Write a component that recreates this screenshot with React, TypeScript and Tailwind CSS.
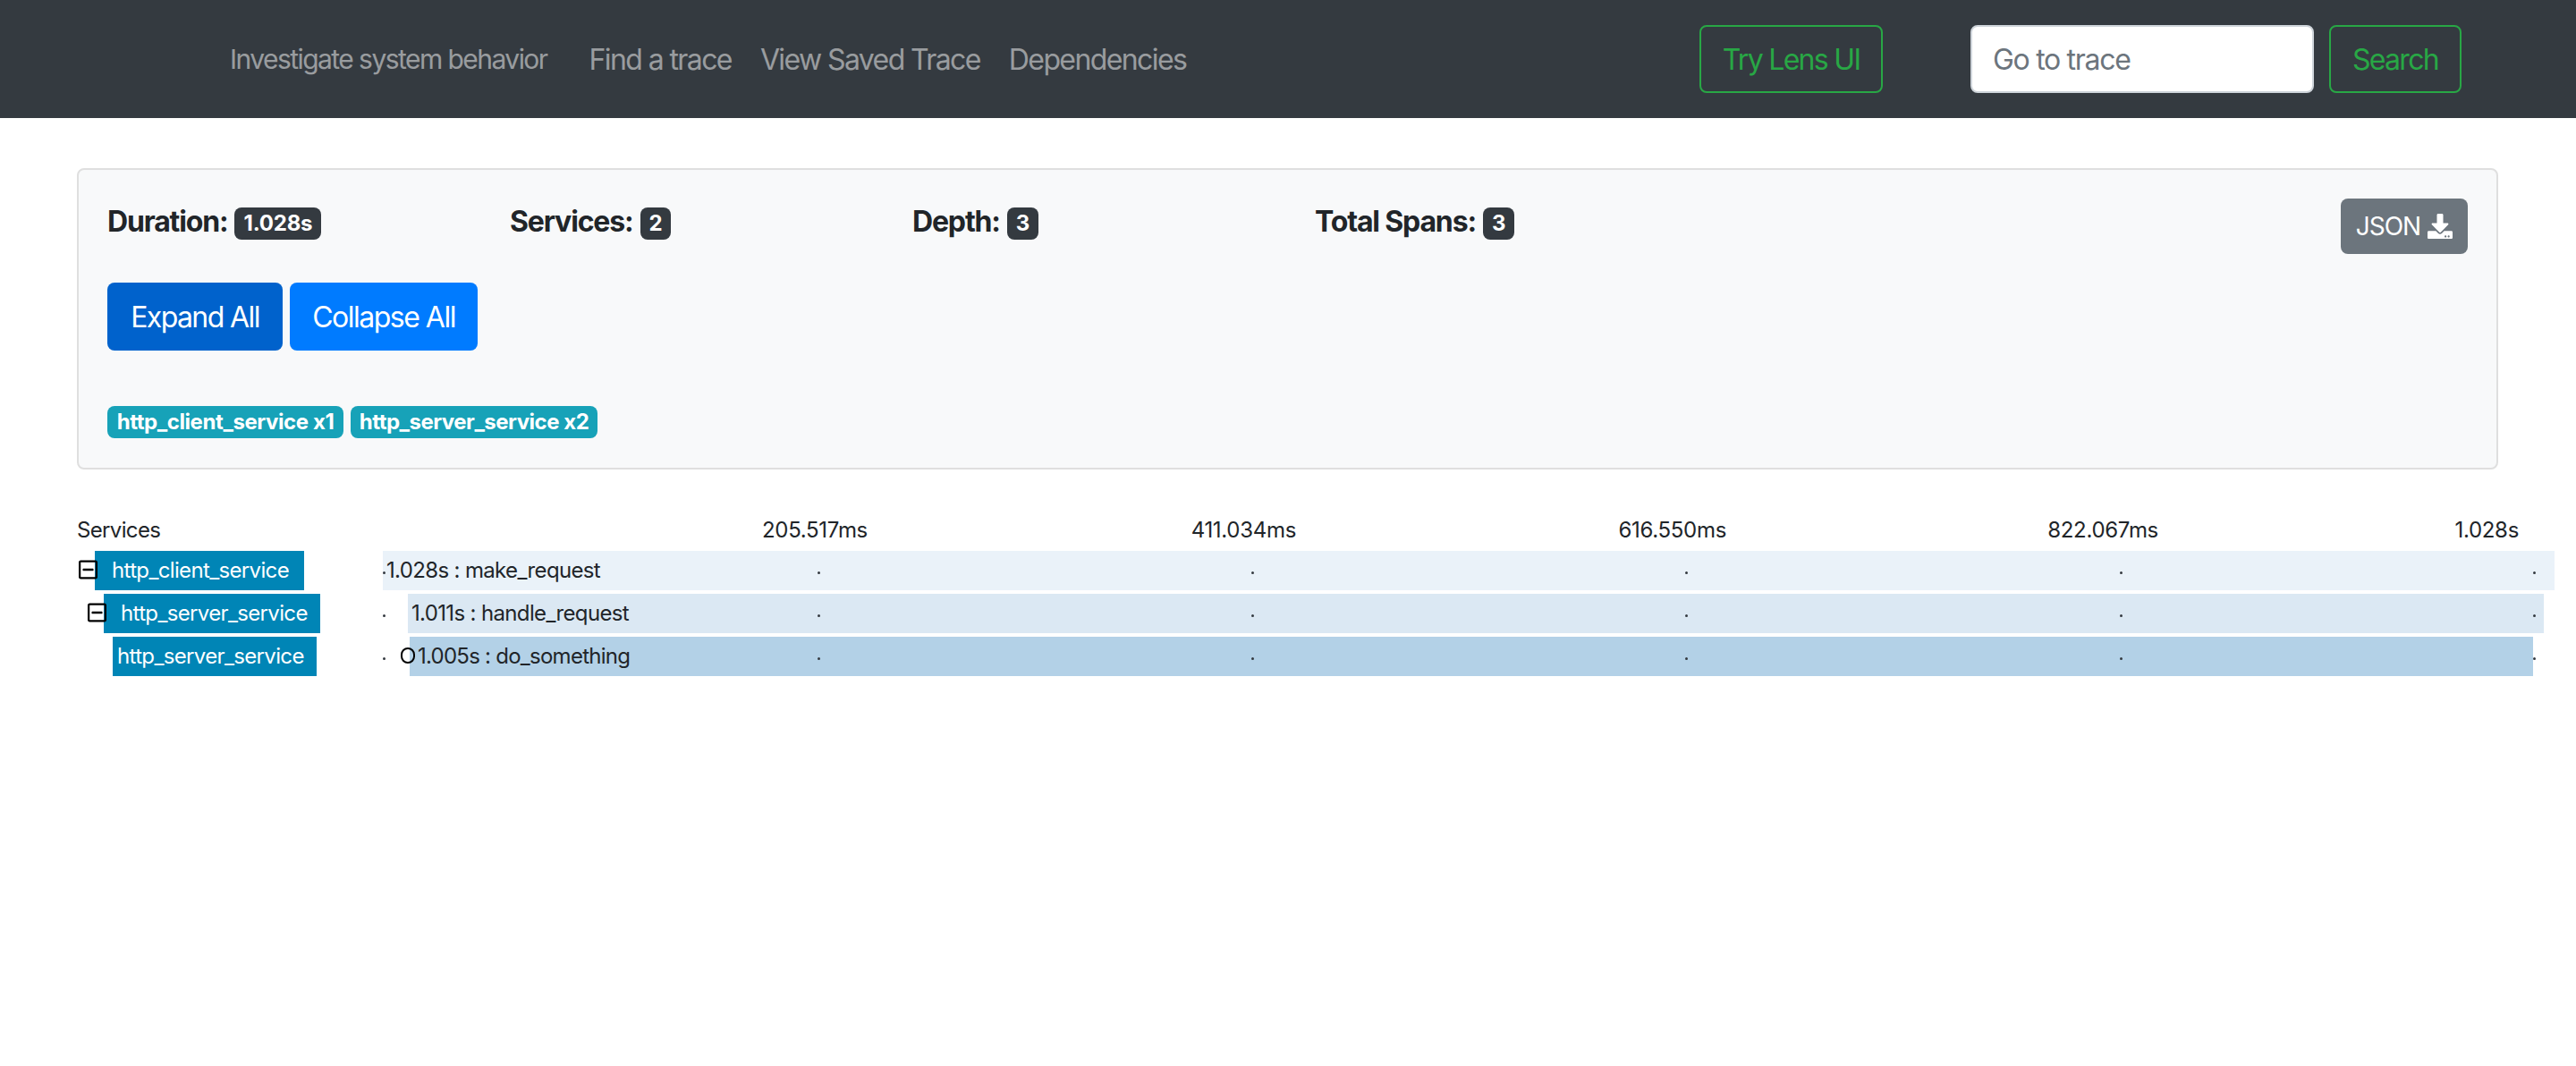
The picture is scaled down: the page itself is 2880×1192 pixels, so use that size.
import { FaDownload, FaRegMinusSquare } from "react-icons/fa";

const stats = [
	{ label: "Duration:", value: "1.028s" },
	{ label: "Services:", value: "2" },
	{ label: "Depth:", value: "3" },
	{ label: "Total Spans:", value: "3" },
];

const ticks = [
	{ text: "205.517ms", width: "w-[542px]" },
	{ text: "411.034ms", width: "w-[479px]" },
	{ text: "616.550ms", width: "w-[481px]" },
	{ text: "822.067ms", width: "w-[483px]" },
	{ text: "1.028s", width: "w-[403px]" },
];

const dots = [
	"left-0",
	"left-[486px]",
	"left-[971px]",
	"left-[1456px]",
	"left-[1942px]",
	"left-[2404px]",
];

const spans = [
	{
		service: "http_client_service",
		toggle: true,
		indent: "pl-[2px]",
		box: "w-[234px] pl-[19px]",
		bar: "ml-0 w-[2428px] bg-[#eaf2f9] pl-[4px]",
		label: "1.028s : make_request",
	},
	{
		service: "http_server_service",
		toggle: true,
		indent: "pl-[12px]",
		box: "w-[242px] pl-[19px]",
		bar: "ml-[28px] w-[2388px] bg-[#dbe8f3] pl-[4px]",
		label: "1.011s : handle_request",
	},
	{
		service: "http_server_service",
		toggle: false,
		indent: "pl-[40px]",
		box: "w-[228px] pl-[5px]",
		bar: "ml-[30px] w-[2374px] bg-[#b3d1e7] pl-[9px] tracking-[-0.75px]",
		label: "1.005s : do_something",
	},
];

const App = () => {
	return (
		<div className="min-h-[1192px] bg-white font-['Inter',sans-serif] text-[#212529]">
			<nav className="flex h-[132px] items-center bg-[#343a40] pl-[257px] pr-[128px] text-[rgba(255,255,255,0.5)]">
				<span className="mr-[47px] text-[30px] tracking-[-1.55px]">Investigate system behavior</span>
				<div className="flex gap-[32px] pt-[2px] text-[32px] tracking-[-1.6px]">
					<a>Find a trace</a>
					<a>View Saved Trace</a>
					<a>Dependencies</a>
				</div>
				<button className="ml-auto h-[76px] w-[205px] rounded-[8px] border-2 border-[#28a745] pt-[2px] text-[32px] tracking-[-1.7px] text-[#28a745]">
					Try Lens UI
				</button>
				<input
					placeholder="Go to trace"
					className="ml-[98px] box-border h-[76px] w-[384px] rounded-[8px] border-2 border-[#ced4da] bg-white px-[23px] text-[32px] tracking-[-1.3px] text-[#495057] placeholder:text-[#6c757d]"
				/>
				<button className="ml-[17px] h-[76px] w-[148px] rounded-[8px] border-2 border-[#28a745] pt-[2px] text-[32px] tracking-[-1.7px] text-[#28a745]">
					Search
				</button>
			</nav>

			<section className="ml-[86px] mt-[56px] box-border h-[337px] w-[2707px] rounded-[8px] border-2 border-[#dfdfdf] bg-[#f8f9fa] pl-[32px] pr-[32px] pt-[32px]">
				<div className="flex h-[62px] items-start">
					{stats.map((stat) => (
						<div key={stat.label} className="flex w-[450px] items-center gap-[8px] pt-[10px]">
							<span className="-mt-[5px] text-[32px] font-bold leading-[36px] tracking-[-1.15px]">{stat.label}</span>
							<span className="flex h-[36px] items-center rounded-[8px] bg-[#343a40] px-[10px] text-[24px] font-bold tracking-[-0.2px] text-white">
								{stat.value}
							</span>
						</div>
					))}
					<button className="ml-auto flex h-[62px] w-[142px] items-center justify-center gap-[8px] rounded-[8px] bg-[#6c757d] text-[28px] tracking-[-1px] text-white">
						JSON
						<FaDownload className="h-[28px] w-[28px]" />
					</button>
				</div>
				<div className="mt-[32px] flex gap-[8px]">
					<button className="h-[76px] w-[196px] rounded-[8px] bg-[#0062cc] pt-[2px] text-[32px] tracking-[-1.6px] text-white">
						Expand All
					</button>
					<button className="h-[76px] w-[210px] rounded-[8px] bg-[#007bff] pt-[2px] text-[32px] tracking-[-1.5px] text-white">
						Collapse All
					</button>
				</div>
				<div className="mt-[62px] flex gap-[8px]">
					<span className="flex h-[36px] w-[264px] items-center justify-center rounded-[8px] bg-[#17a2b8] text-[24px] font-bold tracking-[-0.42px] text-white">
						http_client_service x1
					</span>
					<span className="flex h-[36px] w-[276px] items-center justify-center rounded-[8px] bg-[#17a2b8] text-[24px] font-bold tracking-[-0.5px] text-white">
						http_server_service x2
					</span>
				</div>
			</section>

			<section className="ml-[86px] mt-[50px] text-[24px] tracking-[-0.65px]">
				<div className="flex h-[36px] items-center leading-[36px]">
					<span className="w-[342px]">Services</span>
					{ticks.map((tick) => (
						<span key={tick.text} className={`${tick.width} text-right tracking-[-0.3px]`}>
							{tick.text}
						</span>
					))}
				</div>
				<div className="mt-[5px] flex flex-col gap-[4px]">
					{spans.map((span) => (
						<div key={span.label} className="flex h-[44px]">
							<div className={`flex w-[342px] ${span.indent}`}>
								{span.toggle && (
									<FaRegMinusSquare className="relative z-10 -mr-[3px] mt-[9px] h-[24px] w-[21px] text-black" />
								)}
								<div className={`flex h-[44px] items-center bg-[#0085b6] text-white ${span.box}`}>
									{span.service}
								</div>
							</div>
							<div className="relative w-[2428px]">
								<div className={`flex h-[44px] items-center ${span.bar}`}>{span.label}</div>
								{dots.map((left) => (
									<i key={left} className={`absolute top-[23px] h-[3px] w-[3px] rounded-full bg-[#343a40] ${left}`} />
								))}
								{!span.toggle && (
									<i className="absolute left-[20px] top-[12px] h-[18px] w-[16px] rounded-full border-2 border-black" />
								)}
							</div>
						</div>
					))}
				</div>
			</section>
		</div>
	);
};

export default App;
